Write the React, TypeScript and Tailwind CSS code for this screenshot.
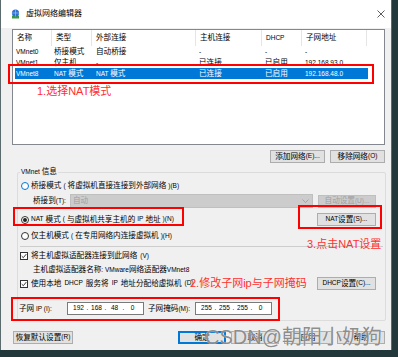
import React from "react";

// Latin runs are drawn smaller than the CJK text, like the Windows UI font.
function T({ s }: { s: string }) {
  const parts = s.split(/([\x20-\x7e]+)/);
  return (
    <>
      {parts.map((p, i) =>
        /^[\x20-\x7e]+$/.test(p) ? (
          <span key={i} className="text-[0.86em]">
            {p}
          </span>
        ) : (
          <React.Fragment key={i}>{p}</React.Fragment>
        )
      )}
    </>
  );
}

interface NetRow {
  name: string;
  type: string;
  ext: string;
  host: string;
  dhcp: string;
  subnet: string;
  selected?: boolean;
}

const rows: NetRow[] = [
  { name: "VMnet0", type: "桥接模式", ext: "自动桥接", host: "-", dhcp: "-", subnet: "-" },
  { name: "VMnet1", type: "仅主机", ext: "-", host: "已连接", dhcp: "已启用", subnet: "192.168.93.0" },
  { name: "VMnet8", type: "NAT 模式", ext: "NAT 模式", host: "已连接", dhcp: "已启用", subnet: "192.168.48.0", selected: true },
];

const headCols = [
  { label: "名称", w: "w-[39px]" },
  { label: "类型", w: "w-[40px]" },
  { label: "外部连接", w: "w-[104px]" },
  { label: "主机连接", w: "w-[66px]" },
  { label: "DHCP", w: "w-[40px]" },
  { label: "子网地址", w: "w-[65px]" },
];

function Button({ label, className = "", disabled = false, isDefault = false }: { label: string; className?: string; disabled?: boolean; isDefault?: boolean }) {
  return (
    <div
      className={`flex items-center justify-center h-[13px] border ${
        disabled
          ? "bg-[#cccccc] border-[#bfbfbf] text-[#a0a0a0]"
          : isDefault
          ? "bg-[#e1e1e1] border-[#0078d7] shadow-[inset_0_0_0_1px_#0078d7]"
          : "bg-[#e1e1e1] border-[#adadad]"
      } ${className}`}
    >
      <T s={label} />
    </div>
  );
}

function Radio({ checked = false, focus = false }: { checked?: boolean; focus?: boolean }) {
  return (
    <span
      className={`w-[8px] h-[8px] rounded-full border bg-white flex items-center justify-center shrink-0 ${
        focus ? "border-[#0078d7]" : "border-[#333333]"
      }`}
    >
      {checked && <span className="w-[4px] h-[4px] rounded-full bg-[#222222]" />}
    </span>
  );
}

function Check() {
  return (
    <span className="w-[8px] h-[8px] border border-[#333333] bg-white flex items-center justify-center shrink-0">
      <svg width="6" height="6" viewBox="0 0 6 6">
        <path d="M0.7 3.1 L2.3 4.7 L5.3 1.1" fill="none" stroke="#222" strokeWidth="0.9" />
      </svg>
    </span>
  );
}

function IpBox({ parts, className = "" }: { parts: string[]; className?: string }) {
  return (
    <div className={`h-[13px] bg-white border border-[#7a7a7a] flex items-center pl-[3px] ${className}`}>
      {parts.map((p, i) => (
        <React.Fragment key={i}>
          {i > 0 && <span className="w-[3px] text-center text-[0.86em]">.</span>}
          <span className="w-[15px] text-center text-[0.86em]">{p}</span>
        </React.Fragment>
      ))}
    </div>
  );
}

export default function App() {
  return (
    <div className="w-[398px] h-[357px] bg-[#22383b] overflow-hidden font-['Liberation_Sans','Noto_Sans_CJK_SC',sans-serif] text-[7.6px] text-black leading-none">
      <div className="relative w-[392px] h-[350px] bg-[#f0f0f0] border-l border-r border-[#5b6a6c] flex flex-col">
        {/* title bar */}
        <div className="h-[28px] bg-white flex items-center pl-[10px]">
          <svg width="9" height="10" viewBox="0 0 9 10">
            <rect x="1" y="6.5" width="7" height="3" rx="0.5" fill="#3b9a3b" />
            <circle cx="4.5" cy="4" r="3.6" fill="#2f6fd1" />
            <path d="M1 4h7M4.5 0.5v7" stroke="#a8cdf7" strokeWidth="0.6" />
          </svg>
          <span className="ml-[6px] text-[8px]">虚拟网络编辑器</span>
          <svg className="ml-auto mr-[6px]" width="8" height="8" viewBox="0 0 8 8">
            <path d="M0.5 0.5 L7.5 7.5 M7.5 0.5 L0.5 7.5" stroke="#333" strokeWidth="0.8" />
          </svg>
        </div>

        {/* network list */}
        <div className="mt-[1px] ml-[11px] w-[373px] h-[116px] bg-white border border-[#828790]">
          <div className="flex h-[16px]">
            {headCols.map((c) => (
              <div key={c.label} className={`${c.w} h-full flex items-center pl-[4px] border-r border-[#e5e5e5]`}>
                <T s={c.label} />
              </div>
            ))}
          </div>
          {rows.map((r) => (
            <div
              key={r.name}
              className={`ml-[2px] w-[353px] h-[11px] flex items-center ${r.selected ? "bg-[#0078d7] text-white" : ""}`}
            >
              <div className="w-[36px] pl-[1px]"><T s={r.name} /></div>
              <div className="w-[40px] pl-[3px]"><T s={r.type} /></div>
              <div className="w-[104px] pl-[5px]"><T s={r.ext} /></div>
              <div className="w-[66px] pl-[4px]"><T s={r.host} /></div>
              <div className="w-[40px] pl-[4px]"><T s={r.dhcp} /></div>
              <div className="w-[67px] pl-[4px]"><T s={r.subnet} /></div>
            </div>
          ))}
        </div>

        {/* add / remove */}
        <div className="mt-[5px] flex justify-end gap-[5px] pr-[6px]">
          <Button label="添加网络(E)..." className="w-[55px]" />
          <Button label="移除网络(O)" className="w-[55px]" />
        </div>

        {/* VMnet info group */}
        <div className="relative mt-[9px] ml-[16px] w-[369px] h-[149px] border border-[#dcdcdc] rounded-[2px] flex flex-col">
          <span className="absolute -top-[5px] left-[2px] px-[1px] bg-[#f0f0f0]">
            <T s="VMnet 信息" />
          </span>

          <div className="mt-[7px] h-[12px] flex items-center pl-[3px] gap-[2px]">
            <Radio focus />
            <T s="桥接模式(将虚拟机直接连接到外部网络)(B)" />
          </div>

          <div className="mt-[2px] h-[14px] flex items-center pl-[15px]">
            <div className="w-[37px]"><T s="桥接到(T):" /></div>
            <div className="w-[243px] h-[14px] bg-[#cccccc] border border-[#bfbfbf] flex items-center pl-[2px] text-[#a0a0a0]">
              自动
              <svg className="ml-auto mr-[3px]" width="7" height="4" viewBox="0 0 7 4">
                <path d="M0.5 0.5 L3.5 3.5 L6.5 0.5" fill="none" stroke="#9a9a9a" strokeWidth="0.8" />
              </svg>
            </div>
            <Button label="自动设置(U)..." disabled className="ml-[5px] w-[58px] h-[12px]" />
          </div>

          <div className="mt-[5px] h-[13px] flex items-center pl-[3px] gap-[2px]">
            <Radio checked />
            <T s="NAT 模式(与虚拟机共享主机的 IP 地址)(N)" />
            <Button label="NAT 设置(S)..." className="ml-auto mr-[9px] w-[59px]" />
          </div>

          <div className="mt-[4px] h-[12px] flex items-center pl-[3px] gap-[2px]">
            <Radio />
            <T s="仅主机模式(在专用网络内连接虚拟机)(H)" />
          </div>

          <div className="mt-[4px] mx-[2px] h-px bg-[#cdcdcd]" />

          <div className="mt-[3px] h-[12px] flex items-center pl-[2px] gap-[3px]">
            <Check />
            <T s="将主机虚拟适配器连接到此网络(V)" />
          </div>

          <div className="mt-[2px] h-[12px] flex items-center pl-[15px]">
            <T s="主机虚拟适配器名称: VMware 网络适配器 VMnet8" />
          </div>

          <div className="mt-[1px] h-[13px] flex items-center pl-[2px] gap-[3px]">
            <Check />
            <T s="使用本地 DHCP 服务将 IP 地址分配给虚拟机(D)" />
            <Button label="DHCP 设置(C)..." className="ml-auto mr-[9px] w-[59px]" />
          </div>

          <div className="mt-[12px] h-[13px] flex items-center pl-[1px]">
            <div className="w-[48px]"><T s="子网 IP (I):" /></div>
            <IpBox parts={["192", "168", "48", "0"]} className="w-[77px]" />
            <div className="ml-[4px] w-[47px]"><T s="子网掩码(M):" /></div>
            <IpBox parts={["255", "255", "255", "0"]} className="w-[77px]" />
          </div>
        </div>

        {/* bottom buttons */}
        <div className="mt-[10px] flex items-center pl-[12px] pr-[6px]">
          <Button label="恢复默认设置(R)" className="w-[60px]" />
          <div className="ml-auto flex gap-[5px]">
            <Button label="确定" isDefault className="w-[48px]" />
            <Button label="取消" className="w-[48px]" />
            <Button label="应用" className="w-[48px]" />
            <Button label="帮助" className="w-[48px]" />
          </div>
        </div>

        {/* annotations */}
        <div className="absolute left-[7px] top-[64px] w-[366px] h-[20px] border-2 border-[#ff0000]" />
        <div className="absolute left-[36px] top-[84px] text-[11px] leading-[14px] text-[#ff3030]">1.选择NAT模式</div>
        <div className="absolute left-[12px] top-[207px] w-[171px] h-[19px] border-2 border-[#ff0000]" />
        <div className="absolute left-[297px] top-[205px] w-[84px] h-[24px] border-2 border-[#ff0000]" />
        <div className="absolute left-[306px] top-[237px] text-[11px] leading-[14px] text-[#ff3030]">3.点击NAT设置</div>
        <div className="absolute left-[189px] top-[276px] text-[11px] leading-[14px] text-[#ff3030]">2.修改子网ip与子网掩码</div>
        <div className="absolute left-[10px] top-[297px] w-[269px] h-[24px] border-2 border-[#ff0000]" />
        <div className="absolute left-[204px] top-[325px] text-[20px] leading-[24px] text-[#6f6f6f]/80 [text-shadow:0_0_1px_#ffffff]">
          CSDN@朝阳小奶狗
        </div>
      </div>
    </div>
  );
}
